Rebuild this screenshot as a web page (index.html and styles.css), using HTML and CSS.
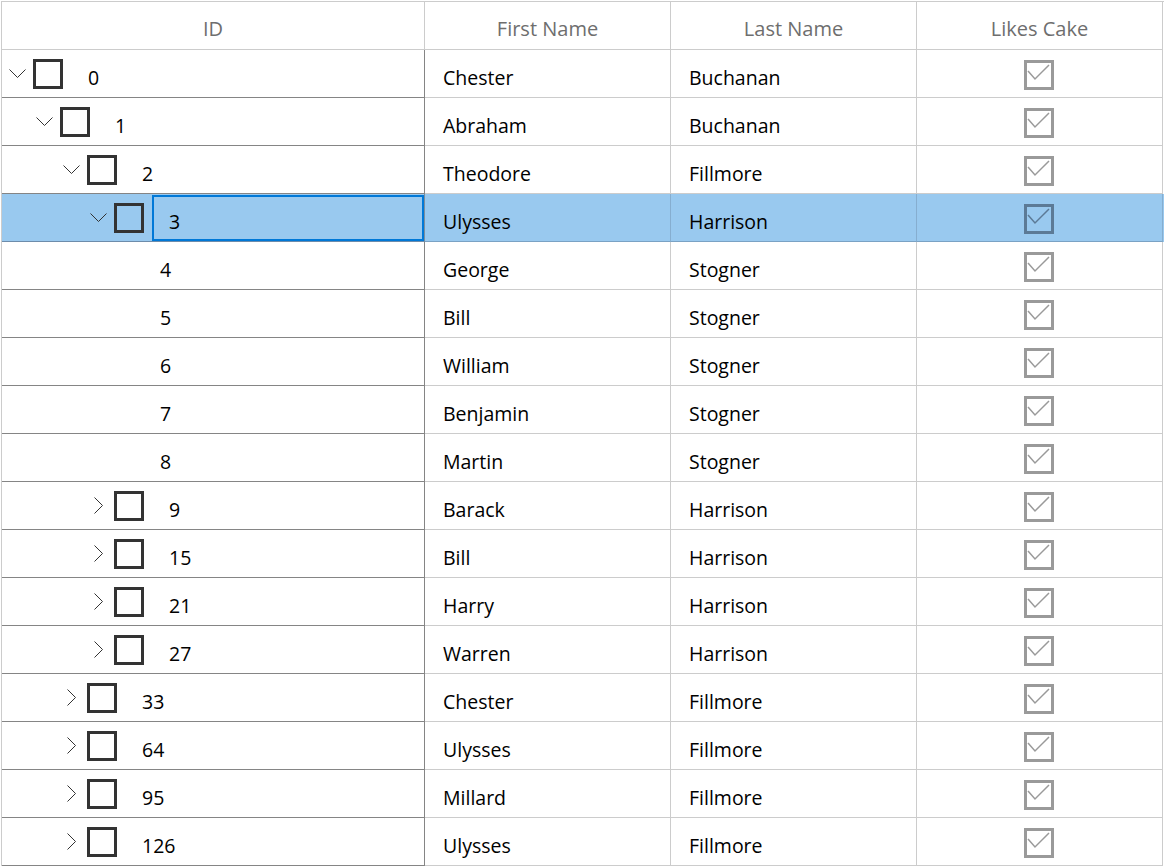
FILE: index.html
```html
<!DOCTYPE html>
<html>
<head>
<meta charset="utf-8">
<title>Tree Grid</title>
<link rel="stylesheet" href="styles.css">
</head>
<body>
<div class="grid">
  <div class="row head">
    <div class="hcell">ID</div>
    <div class="hcell">First Name</div>
    <div class="hcell">Last Name</div>
    <div class="hcell">Likes Cake</div>
  </div>

  <div class="row">
    <div class="cell id l0"><span class="exp"><svg width="17" height="9" viewBox="0 0 17 9"><polyline points="0.5,0.5 8.5,8.5 16.5,0.5"/></svg></span><span class="box"></span><span class="idtext">0</span></div>
    <div class="cell">Chester</div><div class="cell">Buchanan</div>
    <div class="cell cake"><span class="cbox"><svg width="24" height="24" viewBox="0 0 24 24"><polyline points="1,8 8,16 22,2"/></svg></span></div>
  </div>

  <div class="row">
    <div class="cell id l1"><span class="exp"><svg width="17" height="9" viewBox="0 0 17 9"><polyline points="0.5,0.5 8.5,8.5 16.5,0.5"/></svg></span><span class="box"></span><span class="idtext">1</span></div>
    <div class="cell">Abraham</div><div class="cell">Buchanan</div>
    <div class="cell cake"><span class="cbox"><svg width="24" height="24" viewBox="0 0 24 24"><polyline points="1,8 8,16 22,2"/></svg></span></div>
  </div>

  <div class="row">
    <div class="cell id l2"><span class="exp"><svg width="17" height="9" viewBox="0 0 17 9"><polyline points="0.5,0.5 8.5,8.5 16.5,0.5"/></svg></span><span class="box"></span><span class="idtext">2</span></div>
    <div class="cell">Theodore</div><div class="cell">Fillmore</div>
    <div class="cell cake"><span class="cbox"><svg width="24" height="24" viewBox="0 0 24 24"><polyline points="1,8 8,16 22,2"/></svg></span></div>
  </div>

  <div class="row selected">
    <div class="cell id l3"><span class="exp"><svg width="17" height="9" viewBox="0 0 17 9"><polyline points="0.5,0.5 8.5,8.5 16.5,0.5"/></svg></span><span class="box"></span><span class="idtext focus">3</span></div>
    <div class="cell">Ulysses</div><div class="cell">Harrison</div>
    <div class="cell cake"><span class="cbox"><svg width="24" height="24" viewBox="0 0 24 24"><polyline points="1,8 8,16 22,2"/></svg></span></div>
  </div>

  <div class="row">
    <div class="cell id leaf"><span class="idtext">4</span></div>
    <div class="cell">George</div><div class="cell">Stogner</div>
    <div class="cell cake"><span class="cbox"><svg width="24" height="24" viewBox="0 0 24 24"><polyline points="1,8 8,16 22,2"/></svg></span></div>
  </div>

  <div class="row">
    <div class="cell id leaf"><span class="idtext">5</span></div>
    <div class="cell">Bill</div><div class="cell">Stogner</div>
    <div class="cell cake"><span class="cbox"><svg width="24" height="24" viewBox="0 0 24 24"><polyline points="1,8 8,16 22,2"/></svg></span></div>
  </div>

  <div class="row">
    <div class="cell id leaf"><span class="idtext">6</span></div>
    <div class="cell">William</div><div class="cell">Stogner</div>
    <div class="cell cake"><span class="cbox"><svg width="24" height="24" viewBox="0 0 24 24"><polyline points="1,8 8,16 22,2"/></svg></span></div>
  </div>

  <div class="row">
    <div class="cell id leaf"><span class="idtext">7</span></div>
    <div class="cell">Benjamin</div><div class="cell">Stogner</div>
    <div class="cell cake"><span class="cbox"><svg width="24" height="24" viewBox="0 0 24 24"><polyline points="1,8 8,16 22,2"/></svg></span></div>
  </div>

  <div class="row">
    <div class="cell id leaf"><span class="idtext">8</span></div>
    <div class="cell">Martin</div><div class="cell">Stogner</div>
    <div class="cell cake"><span class="cbox"><svg width="24" height="24" viewBox="0 0 24 24"><polyline points="1,8 8,16 22,2"/></svg></span></div>
  </div>

  <div class="row">
    <div class="cell id l3"><span class="exp"><svg width="9" height="17" viewBox="0 0 9 17"><polyline points="0.5,0.5 8.5,8.5 0.5,16.5"/></svg></span><span class="box"></span><span class="idtext">9</span></div>
    <div class="cell">Barack</div><div class="cell">Harrison</div>
    <div class="cell cake"><span class="cbox"><svg width="24" height="24" viewBox="0 0 24 24"><polyline points="1,8 8,16 22,2"/></svg></span></div>
  </div>

  <div class="row">
    <div class="cell id l3"><span class="exp"><svg width="9" height="17" viewBox="0 0 9 17"><polyline points="0.5,0.5 8.5,8.5 0.5,16.5"/></svg></span><span class="box"></span><span class="idtext">15</span></div>
    <div class="cell">Bill</div><div class="cell">Harrison</div>
    <div class="cell cake"><span class="cbox"><svg width="24" height="24" viewBox="0 0 24 24"><polyline points="1,8 8,16 22,2"/></svg></span></div>
  </div>

  <div class="row">
    <div class="cell id l3"><span class="exp"><svg width="9" height="17" viewBox="0 0 9 17"><polyline points="0.5,0.5 8.5,8.5 0.5,16.5"/></svg></span><span class="box"></span><span class="idtext">21</span></div>
    <div class="cell">Harry</div><div class="cell">Harrison</div>
    <div class="cell cake"><span class="cbox"><svg width="24" height="24" viewBox="0 0 24 24"><polyline points="1,8 8,16 22,2"/></svg></span></div>
  </div>

  <div class="row">
    <div class="cell id l3"><span class="exp"><svg width="9" height="17" viewBox="0 0 9 17"><polyline points="0.5,0.5 8.5,8.5 0.5,16.5"/></svg></span><span class="box"></span><span class="idtext">27</span></div>
    <div class="cell">Warren</div><div class="cell">Harrison</div>
    <div class="cell cake"><span class="cbox"><svg width="24" height="24" viewBox="0 0 24 24"><polyline points="1,8 8,16 22,2"/></svg></span></div>
  </div>

  <div class="row">
    <div class="cell id l2"><span class="exp"><svg width="9" height="17" viewBox="0 0 9 17"><polyline points="0.5,0.5 8.5,8.5 0.5,16.5"/></svg></span><span class="box"></span><span class="idtext">33</span></div>
    <div class="cell">Chester</div><div class="cell">Fillmore</div>
    <div class="cell cake"><span class="cbox"><svg width="24" height="24" viewBox="0 0 24 24"><polyline points="1,8 8,16 22,2"/></svg></span></div>
  </div>

  <div class="row">
    <div class="cell id l2"><span class="exp"><svg width="9" height="17" viewBox="0 0 9 17"><polyline points="0.5,0.5 8.5,8.5 0.5,16.5"/></svg></span><span class="box"></span><span class="idtext">64</span></div>
    <div class="cell">Ulysses</div><div class="cell">Fillmore</div>
    <div class="cell cake"><span class="cbox"><svg width="24" height="24" viewBox="0 0 24 24"><polyline points="1,8 8,16 22,2"/></svg></span></div>
  </div>

  <div class="row">
    <div class="cell id l2"><span class="exp"><svg width="9" height="17" viewBox="0 0 9 17"><polyline points="0.5,0.5 8.5,8.5 0.5,16.5"/></svg></span><span class="box"></span><span class="idtext">95</span></div>
    <div class="cell">Millard</div><div class="cell">Fillmore</div>
    <div class="cell cake"><span class="cbox"><svg width="24" height="24" viewBox="0 0 24 24"><polyline points="1,8 8,16 22,2"/></svg></span></div>
  </div>

  <div class="row">
    <div class="cell id l2"><span class="exp"><svg width="9" height="17" viewBox="0 0 9 17"><polyline points="0.5,0.5 8.5,8.5 0.5,16.5"/></svg></span><span class="box"></span><span class="idtext">126</span></div>
    <div class="cell">Ulysses</div><div class="cell">Fillmore</div>
    <div class="cell cake"><span class="cbox"><svg width="24" height="24" viewBox="0 0 24 24"><polyline points="1,8 8,16 22,2"/></svg></span></div>
  </div>
</div>
</body>
</html>
```

FILE: styles.css
```css
html, body {
  margin: 0;
  padding: 0;
  background: #ffffff;
}

body {
  font-family: "Open Sans", "Noto Sans", sans-serif;
  font-size: 19.5px;
  color: #000000;
  overflow: hidden;
}

.grid {
  margin: 1px 0 0 1px;
  border-top: 1px solid #cccccc;
  border-left: 1px solid #cccccc;
  width: 1162px;
}

.row {
  display: grid;
  grid-template-columns: 423px 246px 246px 246px;
  height: 48px;
}

.hcell {
  box-sizing: border-box;
  border-right: 1px solid #cccccc;
  border-bottom: 1px solid #cccccc;
  color: #6e6e6e;
  font-size: 20px;
  display: flex;
  align-items: center;
  justify-content: center;
  padding-top: 5px;
}

.cell {
  box-sizing: border-box;
  border-right: 1px solid #cccccc;
  border-bottom: 1px solid #cccccc;
  display: flex;
  align-items: center;
  padding: 8px 0 0 18px;
}

.cell.id {
  border-right-color: #858585;
  border-bottom-color: #858585;
  padding: 0;
}

.cell.l1 { padding-left: 27px; }
.cell.l2 { padding-left: 54px; }
.cell.l3 { padding-left: 81px; }
.cell.leaf { padding-left: 140px; }

.exp {
  width: 31px;
  flex: none;
  display: flex;
  align-items: center;
  justify-content: center;
}

.exp svg {
  display: block;
  fill: none;
  stroke: #333333;
  stroke-width: 1;
}

.box {
  flex: none;
  box-sizing: border-box;
  width: 30px;
  height: 30px;
  border: 3px solid #333333;
  margin-top: 1px;
}

.idtext {
  flex: 1;
  align-self: stretch;
  box-sizing: border-box;
  display: flex;
  align-items: center;
  margin: 1px 0 0 8px;
  padding: 7px 0 0 15px;
  border: 2px solid transparent;
}

.leaf .idtext {
  margin-left: 1px;
}

.idtext.focus {
  border-color: #0078d7;
}

.cake {
  justify-content: center;
  padding: 3px 2px 0 0;
}

.cbox {
  box-sizing: border-box;
  width: 30px;
  height: 30px;
  border: 3px solid #9a9a9a;
  display: flex;
  align-items: center;
  justify-content: center;
}

.cbox svg {
  display: block;
  fill: none;
  stroke: #9a9a9a;
  stroke-width: 1.5;
}

.row.selected {
  background: #99c9ef;
}

.row.selected .cell {
  border-right-color: #86aed0;
  border-bottom-color: #7aa2c4;
}

.row.selected .cell.id {
  border-right-color: #7b8d9c;
  border-bottom-color: #6d8cab;
}

.row.selected .cbox {
  border-color: #5c7a96;
}

.row.selected .cbox svg {
  stroke: #5c7a96;
}
```
